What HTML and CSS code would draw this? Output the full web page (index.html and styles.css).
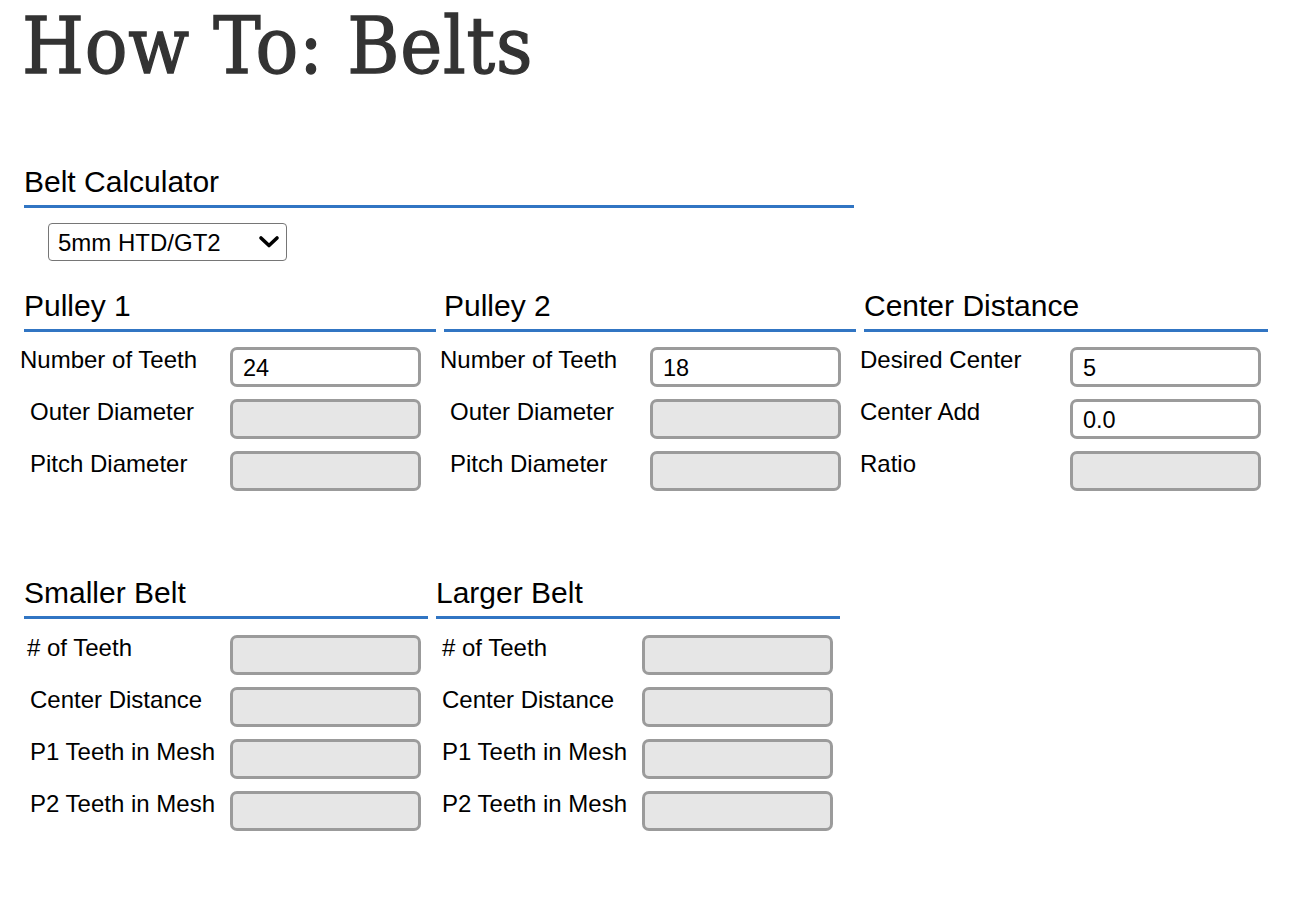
FILE: index.html
```html
<!DOCTYPE html>
<html lang="en">
<head>
<meta charset="utf-8">
<title>How To: Belts</title>
<link rel="stylesheet" href="styles.css">
</head>
<body>
<h1 class="title">How To: Belts</h1>
<section class="calc">
  <h2 class="sec-head calc-head">Belt Calculator</h2>
  <div class="select-wrap">
    <select class="belt-select">
      <option>5mm HTD/GT2</option>
      <option>3mm HTD/GT2</option>
      <option>2mm GT2</option>
    </select>
    <svg class="chev" width="22" height="14" viewBox="0 0 22 14" aria-hidden="true"><path d="M3 3 L11 10.5 L19 3" fill="none" stroke="#000" stroke-width="3.6" stroke-linecap="round" stroke-linejoin="round"/></svg>
  </div>

  <div class="cols cols-top">
    <div class="col col-wide">
      <h3 class="sec-head">Pulley 1</h3>
      <div class="rows">
        <div class="row"><label class="lbl lbl-out">Number of Teeth</label><input class="field" value="24"></div>
        <div class="row"><label class="lbl">Outer Diameter</label><input class="field field-off" readonly></div>
        <div class="row"><label class="lbl">Pitch Diameter</label><input class="field field-off" readonly></div>
      </div>
    </div>
    <div class="col col-wide">
      <h3 class="sec-head">Pulley 2</h3>
      <div class="rows">
        <div class="row"><label class="lbl lbl-out">Number of Teeth</label><input class="field" value="18"></div>
        <div class="row"><label class="lbl">Outer Diameter</label><input class="field field-off" readonly></div>
        <div class="row"><label class="lbl">Pitch Diameter</label><input class="field field-off" readonly></div>
      </div>
    </div>
    <div class="col">
      <h3 class="sec-head">Center Distance</h3>
      <div class="rows">
        <div class="row"><label class="lbl lbl-out">Desired Center</label><input class="field" value="5"></div>
        <div class="row"><label class="lbl lbl-out">Center Add</label><input class="field" value="0.0"></div>
        <div class="row"><label class="lbl lbl-out">Ratio</label><input class="field field-off" readonly></div>
      </div>
    </div>
  </div>

  <div class="cols cols-bottom">
    <div class="col">
      <h3 class="sec-head">Smaller Belt</h3>
      <div class="rows">
        <div class="row"><label class="lbl lbl-hash">#&nbsp;of Teeth</label><input class="field field-off" readonly></div>
        <div class="row"><label class="lbl">Center Distance</label><input class="field field-off" readonly></div>
        <div class="row"><label class="lbl">P1 Teeth in Mesh</label><input class="field field-off" readonly></div>
        <div class="row"><label class="lbl">P2 Teeth in Mesh</label><input class="field field-off" readonly></div>
      </div>
    </div>
    <div class="col">
      <h3 class="sec-head">Larger Belt</h3>
      <div class="rows">
        <div class="row"><label class="lbl">#&nbsp;of Teeth</label><input class="field field-off" readonly></div>
        <div class="row"><label class="lbl">Center Distance</label><input class="field field-off" readonly></div>
        <div class="row"><label class="lbl">P1 Teeth in Mesh</label><input class="field field-off" readonly></div>
        <div class="row"><label class="lbl">P2 Teeth in Mesh</label><input class="field field-off" readonly></div>
      </div>
    </div>
  </div>
</section>
</body>
</html>
```

FILE: styles.css
```css
html, body {
  margin: 0;
  padding: 0;
  background: #ffffff;
}

body {
  padding: 0 24px;
  font-family: "Liberation Sans", Arial, Helvetica, sans-serif;
  color: #000;
}

.title {
  margin: 0 0 0 -2px;
  padding: 0;
  font-family: "DejaVu Serif Condensed", "DejaVu Serif", serif;
  font-stretch: condensed;
  font-weight: normal;
  font-size: 79px;
  line-height: 92px;
  letter-spacing: 0.8px;
  color: #333333;
  -webkit-text-stroke: 1.3px #333333;
  white-space: nowrap;
}

.calc {
  margin-top: 73px;
}

.sec-head {
  margin: 0;
  font-family: "Liberation Sans", Arial, Helvetica, sans-serif;
  font-weight: normal;
  font-size: 30px;
  line-height: 34px;
  padding-bottom: 6px;
  border-bottom: 3px solid #3175c3;
  white-space: nowrap;
}

.calc-head {
  width: 830px;
}

.select-wrap {
  position: relative;
  display: inline-block;
  margin: 15px 0 0 24px;
  vertical-align: top;
}

.belt-select {
  display: block;
  -webkit-appearance: none;
  appearance: none;
  width: 239px;
  height: 38px;
  box-sizing: border-box;
  padding: 0 30px 0 9px;
  border: 1px solid #767676;
  border-radius: 4px;
  background: #fff;
  color: #000;
  font-family: "Liberation Sans", Arial, Helvetica, sans-serif;
  font-size: 24px;
}

.chev {
  position: absolute;
  right: 7px;
  top: 12px;
  pointer-events: none;
}

.cols {
  display: flex;
  gap: 8px;
  align-items: flex-start;
}

.cols-top {
  margin-top: 28px;
}

.cols-bottom {
  margin-top: 85px;
}

.col {
  width: 404px;
  flex: 0 0 auto;
}

.col-wide {
  width: 412px;
}

.rows {
  display: flex;
  flex-direction: column;
  gap: 12px;
  margin-top: 15px;
}

.cols-bottom .rows {
  margin-top: 16px;
}

.row {
  display: flex;
  align-items: flex-start;
  height: 40px;
}

.lbl {
  box-sizing: border-box;
  width: 206px;
  flex: 0 0 auto;
  padding-left: 6px;
  padding-top: 1px;
  font-size: 24px;
  line-height: 24px;
  white-space: nowrap;
}

.lbl-out {
  margin-left: -4px;
  width: 210px;
  padding-left: 0;
}

.lbl-hash {
  padding-left: 3px;
}

.field {
  box-sizing: border-box;
  width: 191px;
  height: 40px;
  margin: 0;
  padding: 2px 10px 0;
  border: 3px solid #9b9b9b;
  border-radius: 7px;
  background: #ffffff;
  color: #000;
  font-family: "Liberation Sans", Arial, Helvetica, sans-serif;
  font-size: 23.5px;
  outline: none;
}

.field-off {
  background: #e6e6e6;
}
```
